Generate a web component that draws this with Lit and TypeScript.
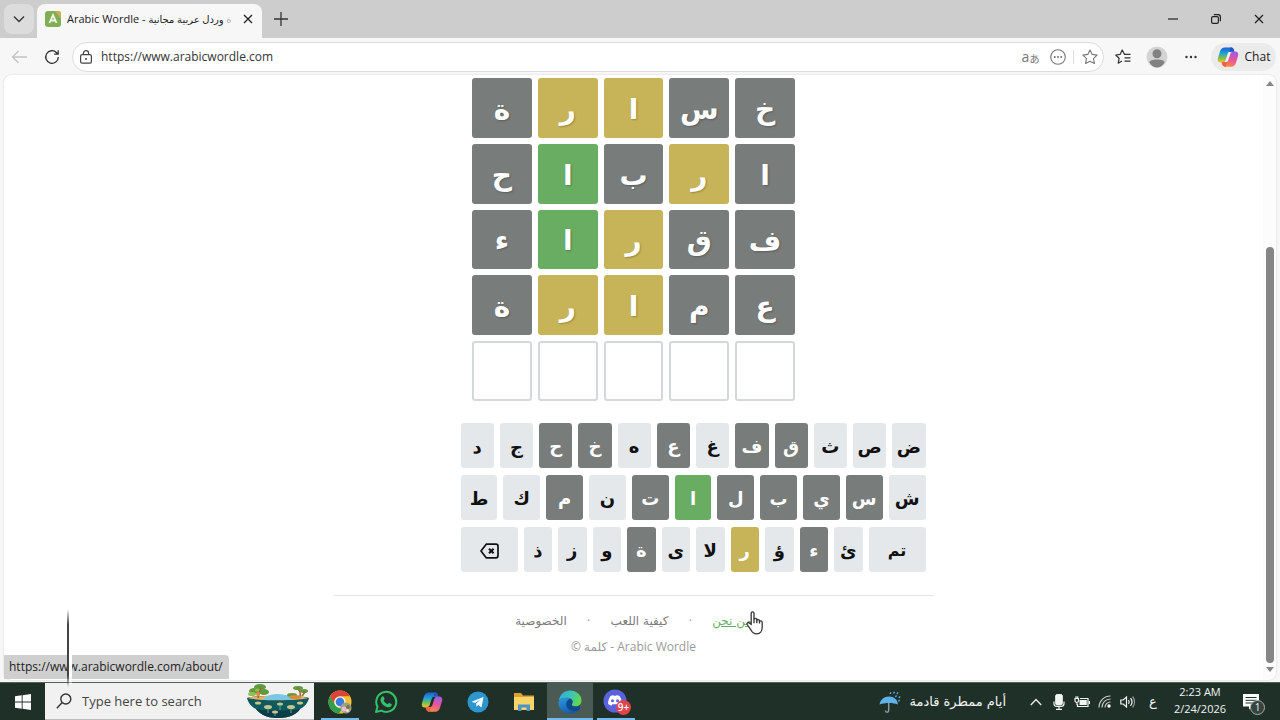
import { LitElement, html, css } from "lit";
import { customElement } from "lit/decorators.js";
import { classMap } from "lit/directives/class-map.js";

type Mark = "absent" | "present" | "correct" | "";

const A: Mark = "absent";
const P: Mark = "present";
const C: Mark = "correct";

const GUESSES: [string, Mark][][] = [
  [["خ", A], ["س", A], ["ا", P], ["ر", P], ["ة", A]],
  [["ا", A], ["ر", P], ["ب", A], ["ا", C], ["ح", A]],
  [["ف", A], ["ق", A], ["ر", P], ["ا", C], ["ء", A]],
  [["ع", A], ["م", A], ["ا", P], ["ر", P], ["ة", A]],
  [["", ""], ["", ""], ["", ""], ["", ""], ["", ""]],
];

const KEYS: string[][] = [
  ["ض", "ص", "ث", "ق", "ف", "غ", "ع", "ه", "خ", "ح", "ج", "د"],
  ["ش", "س", "ي", "ب", "ل", "ا", "ت", "ن", "م", "ك", "ط"],
  ["تم", "ئ", "ء", "ؤ", "ر", "لا", "ى", "ة", "و", "ز", "ذ", "⌫"],
];

const KEY_MARKS: Record<string, Mark> = {
  ق: A, ف: A, ع: A, خ: A, ح: A, س: A, ي: A, ب: A, ل: A, ت: A, م: A, ء: A, ة: A,
  ا: C,
  ر: P,
};

const copilot = (id: string, size: number, hole: string) => html`
  <svg width=${size} height=${size} viewBox="0 0 24 24" aria-hidden="true">
    <defs>
      <linearGradient id="${id}a" x1="0.3" y1="0" x2="0.3" y2="1">
        <stop offset="0" stop-color="#1b5fd0" /><stop offset="0.4" stop-color="#1fa3d8" />
        <stop offset="0.7" stop-color="#7cc04b" /><stop offset="1" stop-color="#f2c230" />
      </linearGradient>
      <linearGradient id="${id}b" x1="0.6" y1="0" x2="0.3" y2="1">
        <stop offset="0" stop-color="#a55be0" /><stop offset="0.5" stop-color="#e8559c" />
        <stop offset="1" stop-color="#f98a3c" />
      </linearGradient>
    </defs>
    <path fill="url(#${id}a)" d="M8.500 1.500h7c1.400 0 2.300.9 2.700 2.200l.8 2.600-6.500 2-3 9.700H4.200C1.600 18 .3 16 .9 13.500l2.500-8C4.100 3 6 1.500 8.500 1.500z" />
    <path fill="url(#${id}b)" d="M15.500 22.500h-7c-1.400 0-2.300-.9-2.700-2.200L5 17.700l6-2 3.300-9.700h5.500c2.600 0 3.900 2 3.300 4.500l-2.500 8C19.900 21 18 22.500 15.500 22.500z" />
    <path fill="#1f57c9" d="M14.200 1.500h1.300c1.400 0 2.300.9 2.700 2.200l.7 2.300h-2.200c-1.500 0-2.600.6-3.200 1.700z" />
    <path fill="#f0603c" d="M9.800 22.500H8.500c-1.400 0-2.300-.9-2.700-2.200L5.100 18h2.200c1.500 0 2.600-.6 3.200-1.700z" />
    <path fill=${hole} d="M12.800 6.500h3.400c-1.100.5-1.500 1.300-1.800 2.400l-1.900 6.200c-.5 1.700-1.200 2.400-3 2.400H7.800c1.100-.5 1.500-1.300 1.800-2.400l1.900-6.200c.3-1.100.6-1.900 1.300-2.400z" />
  </svg>`;

const icon = {
  chevronDown: html`<svg width="12" height="12" viewBox="0 0 12 12" fill="none" stroke="#333" stroke-width="1.300"><path d="M1 3.500l5 5 5-5" /></svg>`,
  favicon: html`<svg width="16" height="16" viewBox="0 0 16 16"><rect width="16" height="16" rx="3" fill="#7fae54" /><path d="M10 0h3a3 3 0 0 1 3 3v5z" fill="#c8b055" /><path d="M4.500 12L8 4l3.500 8M6 9.500h4" fill="none" stroke="#f4f6e8" stroke-width="1.800" /></svg>`,
  close: html`<svg width="10" height="10" viewBox="0 0 10 10" stroke="#222" stroke-width="1.300"><path d="M1 1l8 8M9 1l-8 8" /></svg>`,
  plus: html`<svg width="14" height="14" viewBox="0 0 14 14" stroke="#333" stroke-width="1.300"><path d="M7 0v14M0 7h14" /></svg>`,
  min: html`<svg width="10" height="10" viewBox="0 0 10 10" stroke="#222" stroke-width="1.200"><path d="M0 5h10" /></svg>`,
  restore: html`<svg width="10" height="10" viewBox="0 0 10 10" fill="none" stroke="#222" stroke-width="1.200"><rect x=".6" y="2.600" width="6.800" height="6.800" rx="1.400" /><path d="M2.800.7h4.400a2.200 2.200 0 0 1 2.200 2.200v4.300" /></svg>`,
  back: html`<svg width="16" height="14" viewBox="0 0 16 14" fill="none" stroke="#c4c4c4" stroke-width="1.300"><path d="M16 7H1.500M7.500 1l-6 6 6 6" /></svg>`,
  reload: html`<svg width="16" height="16" viewBox="0 0 16 16" fill="none" stroke="#333" stroke-width="1.300"><path d="M14.300 8A6.300 6.300 0 1 1 12.600 3.700L14 5.200M14.200 1.200v4h-4" /></svg>`,
  lock: html`<svg width="12" height="14" viewBox="0 0 12 14" fill="none" stroke="#444" stroke-width="1.200"><rect x=".6" y="4.600" width="10.800" height="8.600" rx="1.600" /><path d="M3.400 4.500V3.200a2.600 2.600 0 0 1 5.200 0v1.300" /><circle cx="6" cy="9" r="1" fill="#444" stroke="none" /></svg>`,
  more: html`<svg width="16" height="16" viewBox="0 0 16 16"><circle cx="8" cy="8" r="7.300" fill="none" stroke="#777" stroke-width="1.100" /><g fill="#666"><circle cx="4.800" cy="8" r=".9" /><circle cx="8" cy="8" r=".9" /><circle cx="11.200" cy="8" r=".9" /></g></svg>`,
  star: html`<svg width="16" height="16" viewBox="0 0 16 16" fill="none" stroke="#777" stroke-width="1.100" stroke-linejoin="round"><path d="M8 .9l2.200 4.500 4.900.7-3.600 3.500.9 4.900L8 12.200l-4.400 2.300.9-4.900L.9 6.100l4.900-.7z" /></svg>`,
  favorites: html`<svg width="16" height="16" viewBox="0 0 16 16" fill="none" stroke="#333" stroke-width="1.200" stroke-linejoin="round"><path d="M15.500 5.400H9.500L7.200 1 5.200 5.300.7 6l3.400 3.300-.9 4.900L7 12M9.500 8.800h6M9.500 12.200h6" /></svg>`,
  avatar: html`<svg width="22" height="22" viewBox="0 0 22 22"><circle cx="11" cy="11" r="10.500" fill="#d4d4d4" /><circle cx="11" cy="7.700" r="4.500" fill="#828282" /><path d="M3.500 16.500c0-2 3-3 7.500-3s7.500 1 7.500 3c-1.500 3-4.500 5-7.500 5s-6-2-7.500-5z" fill="#828282" /></svg>`,
  dots: html`<svg width="12" height="4" viewBox="0 0 12 4" fill="#333"><circle cx="1.500" cy="2" r="1.200" /><circle cx="6" cy="2" r="1.200" /><circle cx="10.500" cy="2" r="1.200" /></svg>`,
  backspace: html`<svg width="19" height="16" viewBox="0 0 19 16" fill="none" stroke="#111" stroke-width="1.700" stroke-linejoin="round"><path d="M6.200 1.200h9.800a2 2 0 0 1 2 2v9.600a2 2 0 0 1-2 2H6.200L1 8z" /><path d="M9 5.700l4.600 4.600M13.600 5.700L9 10.300" stroke-width="2" /></svg>`,
  hand: html`<svg width="18" height="24" viewBox="0 0 18 24" fill="#fff" stroke="#333" stroke-width="1.300" stroke-linejoin="round"><path d="M5.200 13.500V2.300c0-2 2.800-2 2.800 0v6.200c.2-1.500 2.700-1.400 2.800.2v.6c.4-1.200 2.600-1 2.700.5v.7c.6-1 2.700-.7 2.700.9v4.900c0 3.800-2.200 6.500-5.500 6.500-3 0-4.300-1.200-5.600-3.600L1.200 13.500c-.8-1.500 1-2.700 2.200-1.500z" /><path d="M8 8.500v3.800M10.800 9v3.300M13.500 10v2.500" fill="none" /></svg>`,
  windows: html`<svg width="16" height="16" viewBox="0 0 16 16" fill="#fff"><path d="M0 2.300l6.700-1v6.200H0zM7.600 1.200L16 0v7.500H7.600zM0 8.400h6.700v6.300L0 13.700zM7.600 8.400H16V16l-8.400-1.200z" /></svg>`,
  search: html`<svg width="16" height="16" viewBox="0 0 16 16" fill="none" stroke="#333" stroke-width="1.400"><circle cx="9.800" cy="6" r="5" /><path d="M6.200 9.600L.8 15.200" /></svg>`,
  island: html`<svg width="64" height="36" viewBox="0 0 64 36">
    <path d="M1 15c4-3 58-3 62 0-1 5-5 9-9 11-2 4-9 9-22 9S13 30 10 26C6 24 2 20 1 15z" fill="#0f5a5e" />
    <path d="M10 26c6 2 38 2 44 0-2 4-9 9-22 9S13 30 10 26z" fill="#0b3c47" />
    <path d="M2 15c8-3 52-3 60 0-8 3-52 3-60 0z" fill="#e2b06a" />
    <path d="M20 14c5-4 18-4 24 0l3 3H17z" fill="#7cc6e6" />
    <g fill="#5f9a3c"><ellipse cx="8" cy="8" rx="5" ry="3" /><ellipse cx="14" cy="4" rx="6" ry="3" /><ellipse cx="18" cy="9" rx="5" ry="3" /><ellipse cx="52" cy="5" rx="5" ry="2" /><ellipse cx="58" cy="8" rx="4" ry="2" /><ellipse cx="46" cy="12" rx="5" ry="2" /></g>
    <g fill="#93bf52"><ellipse cx="6" cy="11" rx="4" ry="2" /><ellipse cx="12" cy="7" rx="3" ry="1.500" /></g>
    <g stroke="#a8622e" stroke-width="1.500" fill="none"><path d="M12 15c1-4 1-7 3-10M54 14c1-4 0-6-2-8M56 13l3-4" /></g>
    <g fill="#d98b3a"><circle cx="12" cy="11" r="2" /><ellipse cx="49" cy="14" rx="6" ry="2" /></g>
    <g fill="#c9c48a"><ellipse cx="22" cy="24" rx="4" ry="2" /><ellipse cx="34" cy="21" rx="3" ry="1.500" /><ellipse cx="45" cy="24" rx="4" ry="2" /><ellipse cx="29" cy="29" rx="3" ry="1.500" /><ellipse cx="12" cy="20" rx="3" ry="1.500" /><ellipse cx="54" cy="20" rx="3" ry="1.500" /></g>
    <path d="M22 26v4M45 26v4M34 22v5M29 30v3" stroke="#4fa7a0" stroke-width="1" />
  </svg>`,
  chrome: html`<svg width="24" height="24" viewBox="0 0 24 24">
    <circle cx="12" cy="12" r="11.500" fill="#f4c430" />
    <path d="M2 6.200A11.500 11.500 0 0 1 22 6.200H12a6 6 0 0 0-5.200 8.600z" fill="#dd4437" />
    <path d="M2 6.200l5 8.800a6 6 0 0 0 7.500 2.500l-3.300 6A11.500 11.500 0 0 1 2 6.200z" fill="#2f9e4f" />
    <circle cx="12" cy="12" r="5.600" fill="#fff" /><circle cx="12" cy="12" r="4.400" fill="#3b7de0" />
    <circle cx="18" cy="18" r="5.500" fill="#a79a86" /><circle cx="16" cy="19" r="2.500" fill="#dfc4cf" /><circle cx="20" cy="17" r="2" fill="#6e7a4e" /><circle cx="19.500" cy="20.500" r="1.500" fill="#ece6dc" />
  </svg>`,
  whatsapp: html`<svg width="24" height="24" viewBox="0 0 24 24"><path d="M2 22l1.500-5.300A10 10 0 1 1 7.400 20.600z" fill="none" stroke="#35c06a" stroke-width="2" stroke-linejoin="round" /><path d="M8.200 6.500c.6-.5 1.200-.3 1.500.3l.8 1.800c.1.400 0 .8-.9 1.800.9 1.800 2.300 3 4.100 3.800.9-1 1.200-1.300 1.600-1.200l2 .9c.5.300.5.700.3 1.400-.6 1.800-2.700 2.400-4.300 1.900-3.300-1-5.600-3.200-6.600-6-.5-1.700.3-3.800 1.500-4.700z" fill="#35c06a" /></svg>`,
  telegram: html`<svg width="22" height="22" viewBox="0 0 22 22"><circle cx="11" cy="11" r="10.500" fill="#2d96cf" /><path d="M4.500 10.700l12-4.700-2 10.500-3.300-2.400-1.700 1.700-.4-3.200 4.600-4.200-5.900 3.600z" fill="#fff" /></svg>`,
  folder: html`<svg width="22" height="20" viewBox="0 0 22 20"><path d="M1 1h7l2 2.500h11V8H1z" fill="#dca132" /><rect x="1" y="5" width="20" height="13" fill="#f7d468" /><path d="M5 19v-6.500h12V19h-3.500v-3.500h-5V19z" fill="#4a92c8" /></svg>`,
  edge: html`<svg width="24" height="24" viewBox="0 0 24 24">
    <defs>
      <linearGradient id="eg" x1="0" y1="0" x2="1" y2=".3"><stop offset="0" stop-color="#2fa9e0" /><stop offset=".6" stop-color="#3cc7b4" /><stop offset="1" stop-color="#62d64e" /></linearGradient>
      <linearGradient id="eb" x1="0" y1="0" x2=".6" y2="1"><stop offset="0" stop-color="#2b9be4" /><stop offset="1" stop-color="#1259a8" /></linearGradient>
    </defs>
    <path d="M.8 10.500C1.600 4.600 6.400.5 12 .5c6.500 0 11.500 4.500 11.500 10 0 3.500-2.600 6-5.800 6-2.500 0-4-1-4-2 0-.6.900-1 .9-2.700 0-2.300-2-4-5-4C5.600 7.800 2 9 .8 10.500z" fill="url(#eg)" />
    <path d="M.5 12.500C.8 9.300 4.500 7.700 8 7.700c2 0 3.600.5 4.600 1.200-2.500.3-4.300 2.500-4.300 5.100 0 4 3.700 7 8 7 2.200 0 3.900-.7 5-1.300-2 2.400-5.600 3.900-9.300 3.900C5.500 23.500.2 18.500.5 12.500z" fill="url(#eb)" />
    <path d="M8.300 14c0-2.600 1.800-4.800 4.300-5.100 1.300.7 2 1.800 2 3 0 1.600-.9 2-.9 2.600 0 1 1.500 2 4 2 1.500 0 2.900-.5 3.900-1.500.6 1.500.7 3.400-.3 4.700-5 2.700-13 .8-13-5.700z" fill="#0f4a8c" />
  </svg>`,
  discord: html`<svg width="26" height="26" viewBox="0 0 26 26"><circle cx="12" cy="12" r="11.500" fill="#5a63dc" /><path d="M7.500 7c2-1 3-.9 3.400-.3h2.200c.5-.6 1.500-.7 3.400.3 1.800 2.600 2.500 5.300 2.300 8-1.600 1.400-2.700 1.500-3.300 1.500l-.9-1.300H9.400l-.9 1.300c-.6 0-1.700-.1-3.300-1.500-.2-2.700.5-5.400 2.300-8z" fill="#fff" /><circle cx="9.500" cy="11.800" r="1.500" fill="#5a63dc" /><circle cx="14.500" cy="11.800" r="1.500" fill="#5a63dc" /></svg>`,
  umbrella: html`<svg width="22" height="22" viewBox="0 0 22 22"><path d="M.5 13.500c.8-5 4.500-8 9.500-8s8.700 3 9 8c-5-2-13-2-18.500 0z" fill="#5fb2ea" /><path d="M9.700 12v7.500c0 2.300-3.200 2.300-3.200 0" fill="none" stroke="#8a9aa4" stroke-width="1.500" /><path d="M11 3l1-1.700M14.500 2.500l1-1.700M18 3l1-1.700M16.500 6l1-1.700M20 7l1-1.700M19.500 10.500l1-1.700" stroke="#5fb2ea" stroke-width="1.300" /></svg>`,
  up: html`<svg width="12" height="8" viewBox="0 0 12 8" fill="none" stroke="#e6e9e8" stroke-width="1.400"><path d="M.8 7L6 1.500 11.200 7" /></svg>`,
  mic: html`<svg width="12" height="16" viewBox="0 0 12 16" fill="none" stroke="#f2f4f3"><rect x="2.700" y=".5" width="6.600" height="10.500" rx="1.500" fill="#f2f4f3" /><path d="M1 7.500v2.300c0 1.700 1.200 2.700 3 2.700h4c1.800 0 3-1 3-2.700V7.500M6 12.500V15M3 15.300h6" stroke-width="1.200" /></svg>`,
  battery: html`<svg width="16" height="12" viewBox="0 0 16 12" fill="none" stroke="#f2f4f3" stroke-width="1.200"><path d="M6 2.500h8v8H3.500V8" /><path d="M15.400 5v3" /><rect x="5.500" y="4" width="7.300" height="5" fill="#f2f4f3" stroke="none" /><path d="M1 2.500h3.500v2c0 1.200-.6 2-1.700 2S1 5.700 1 4.500zM2 .3v2M3.700.3v2M3 6.500V9" /></svg>`,
  wifi: html`<svg width="13" height="13" viewBox="0 0 13 13" fill="none" stroke="#c4cbc8" stroke-width="1.200"><path d="M1 12.500C1 6 6 1 12.500 1M4 12.500c0-4.800 3.700-8.500 8.500-8.500M7 12.500c0-3 2.400-5.500 5.500-5.500" /><circle cx="11" cy="11" r="1.700" fill="#fff" stroke="none" /></svg>`,
  sound: html`<svg width="16" height="14" viewBox="0 0 16 14" fill="none" stroke="#f2f4f3" stroke-width="1.200"><path d="M.8 5h2.400L6.500 2v10L3.200 9H.8z" /><path d="M8.500 5c.9 1.200.9 2.800 0 4M10.500 3.200c1.800 2.200 1.800 5.400 0 7.600" /><path d="M12.600 1.500c2.600 3.200 2.600 7.800 0 11" stroke="#8d9894" /></svg>`,
  note: html`<svg width="16" height="16" viewBox="0 0 16 16"><path d="M0 0h16v12.500H9L6 15.500v-3H0z" fill="#fff" /><path d="M2.500 3.500h11M2.500 6.300h11M2.500 9h8" stroke="#1f3029" stroke-width="1" /></svg>`,
};

@customElement("app-root")
export class AppRoot extends LitElement {
  static styles = css`
    :host {
      display: flex;
      flex-direction: column;
      height: 100vh;
      position: relative;
      overflow: hidden;
      background: #f7f7f7;
      color: #222;
      font: 12px/16px "Open Sans", "Noto Sans", "DejaVu Sans", sans-serif;
    }
    * { box-sizing: border-box; }
    svg { display: block; flex: none; }
    button, input {
      font: inherit;
      color: inherit;
      border: 0;
      padding: 0;
      margin: 0;
      background: none;
      outline: 0;
    }
    button { display: flex; align-items: center; justify-content: center; }

    .tabs { display: flex; align-items: flex-end; height: 38px; background: #cdcdcd; padding-left: 4px; flex: none; }
    .tab-menu { width: 30px; height: 30px; border-radius: 8px; background: #dcdcdc; align-self: center; }
    .tab { display: flex; align-items: center; gap: 6px; width: 225px; height: 34px; margin-left: 3px; padding: 0 4px 4px 8px; border-radius: 8px 8px 0 0; background: #f7f7f7; }
    .tab-title { flex: 1; white-space: nowrap; font-size: 11px; }
    .tab-title bdi { font-size: 10px; }
    .faded { color: #b5b5b5; }
    .tab-close { width: 20px; height: 20px; }
    .new-tab { width: 38px; height: 38px; }
    .window-controls { display: flex; margin-left: auto; }
    .window-controls button { width: 43px; height: 38px; }

    .toolbar { display: flex; align-items: center; height: 37px; padding: 0 4px; flex: none; }
    .tool { width: 34px; height: 30px; flex: none; }
    .tool.nav { width: 30px; margin-right: 3px; }
    .address { display: flex; align-items: center; flex: 1; height: 30px; margin: 0 2px; padding: 0 0 0 7px; gap: 9px; border: 1px solid #dcdcdc; border-radius: 15px; background: #fff; }
    .address input { flex: 1; min-width: 0; font-size: 12px; color: #333; }
    .address-tools { display: flex; align-items: center; }
    .address-tools button { width: 27px; height: 28px; }
    .translate { color: #777; font: 14px/16px "Open Sans", "Noto Sans CJK JP", sans-serif; }
    .translate small { font-size: 10px; padding-top: 5px; }
    .separator { width: 1px; height: 14px; margin: 0 2px; background: #ddd; }
    .chat { width: 65px; height: 28px; gap: 6px; margin-left: 3px; border-radius: 14px; background: #ebebeb; font-size: 12px; flex: none; }

    .viewport { display: flex; flex: 1; min-height: 0; margin: 0 4px 2px; border-radius: 8px; background: #fff; overflow: hidden; box-shadow: 0 0 2px #ccc; }
    .page { flex: 1; overflow: hidden; padding-top: 3px; font-family: "DejaVu Sans", sans-serif; }
    .content { display: flex; flex-direction: column; width: 100%; max-width: 600px; margin: 0 auto; }
    .board { display: grid; grid-template-columns: repeat(5, 1fr); gap: 6px; width: 323px; align-self: center; }
    .tile { display: flex; align-items: center; justify-content: center; aspect-ratio: 1; padding-top: 4px; border: 2px solid #d3d9db; border-radius: 3px; font-size: 28px; line-height: 36px; font-weight: 700; }
    .absent { background: #787c7b; border-color: #787c7b; color: #fff; }
    .present { background: #c8b458; border-color: #c8b458; color: #fff; }
    .correct { background: #69ad63; border-color: #69ad63; color: #fff; }
    .tile.absent, .tile.present, .tile.correct { text-shadow: 1px 1px 2px rgb(0 0 0 / 25%); }
    .keyboard { display: flex; flex-direction: column; gap: 7px; width: 481px; max-width: 100%; margin-top: 22px; padding: 0 8px; }
    .key-row { display: flex; gap: 6px; }
    .key { flex: 1 1 0; height: 45px; padding-top: 3px; border-radius: 3px; font-size: 18px; line-height: 24px; font-weight: 700; color: #111; background: #e5e8eb; }
    .key.absent { background: #787c7b; color: #fff; }
    .key.present { background: #c8b458; color: #fff; }
    .key.correct { background: #69ad63; color: #fff; }
    .key.wide { flex-grow: 2; }
    .key.enter { font-size: 16px; }
    footer { margin-top: 23px; padding-top: 16px; border-top: 1px solid #e6e6e6; text-align: center; color: #999; font-size: 12px; line-height: 18px; }
    .links { display: flex; justify-content: center; gap: 20px; }
    .links a { color: #7b7b7b; text-decoration: none; }
    .links a.hovered { color: #69ad63; text-decoration: underline; }
    .copyright { margin: 8px 0 0; font-family: "Open Sans", "DejaVu Sans", sans-serif; }

    .scrollbar { display: flex; flex-direction: column; align-items: center; width: 13px; padding: 6px 0 8px; background: #fcfcfc; }
    .before { flex: 160; }
    .thumb { flex: 415; width: 8px; border-radius: 4px; background: #858585; }
    .after { flex: 4; }

    .status { position: absolute; left: 4px; bottom: 41px; height: 24px; padding: 0 6px 0 5px; border-radius: 0 4px 0 0; background: #cfcfcf; font-size: 12px; line-height: 24px; color: #222; }
    .pointer { position: absolute; left: 746px; top: 611px; }
    .trail { position: absolute; left: 67px; top: 609px; width: 5px; height: 78px; background: linear-gradient(90deg, #444 0 2px, #fff 2px); -webkit-mask-image: linear-gradient(transparent, #000 20%, #000 85%, transparent); mask-image: linear-gradient(transparent, #000 20%, #000 85%, transparent); }

    .taskbar { display: flex; align-items: stretch; height: 38px; background: #1f3029; color: #f2f4f3; flex: none; padding-right: 11px; border-top: 1px solid #52605a; }
    .start { width: 45px; }
    .search { display: flex; align-items: center; gap: 10px; width: 269px; padding: 0 4px 0 11px; background: #f1f1f1; border-bottom: 1px solid #bbb; color: #333; }
    .search input { flex: 1; min-width: 0; font-size: 13px; }
    .search input::placeholder { color: #444; opacity: 1; }
    .apps { display: flex; padding-left: 3px; }
    .app { position: relative; width: 46px; }
    .app.open::after { content: ""; position: absolute; left: 4px; right: 4px; bottom: 0; height: 2px; background: #76b9ed; }
    .app.active { background: #4a5a54; }
    .app.active::after { left: 0; right: 0; }
    .badge { position: absolute; left: 23px; top: 17px; width: 15px; height: 15px; border-radius: 8px; background: #e0434b; color: #fff; font-size: 10px; line-height: 15px; font-weight: 600; }
    .tray { display: flex; align-items: stretch; margin-left: auto; }
    .weather { gap: 8px; margin-right: 18px; font-family: "DejaVu Sans", sans-serif; font-size: 13px; }
    .tray-icon { width: 23px; }
    .lang { width: 28px; font-family: "DejaVu Sans", sans-serif; font-size: 13px; }
    .clock { width: 66px; flex-direction: column; padding-bottom: 3px; font-size: 11px; line-height: 17px; }
    .notifications { position: relative; width: 36px; }
    .count { position: absolute; left: 17px; top: 17px; width: 15px; height: 15px; border: 1px solid #a6aeaa; border-radius: 8px; background: #36443e; font-size: 10px; line-height: 13px; }
  `;

  private renderKey(k: string) {
    const erase = k === "⌫";
    const enter = k === "تم";
    const mark = KEY_MARKS[k] ?? "";
    return html`<button
      class=${classMap({ key: true, wide: erase || enter, enter, absent: mark === A, present: mark === P, correct: mark === C })}
      aria-label=${erase ? "حذف" : k}
    >${erase ? icon.backspace : k}</button>`;
  }

  private renderApp(label: string, glyph: unknown, state = "", badge = "") {
    return html`<button class="app ${state}" aria-label=${label}>${glyph}${badge ? html`<span class="badge">${badge}</span>` : ""}</button>`;
  }

  render() {
    return html`
      <div class="tabs">
        <button class="tab-menu" aria-label="Tab actions">${icon.chevronDown}</button>
        <div class="tab">
          ${icon.favicon}
          <span class="tab-title">Arabic Wordle - <bdi dir="rtl"><span class="faded">ة</span> وردل عربية مجانية</bdi></span>
          <button class="tab-close" aria-label="Close tab">${icon.close}</button>
        </div>
        <button class="new-tab" aria-label="New tab">${icon.plus}</button>
        <div class="window-controls">
          <button aria-label="Minimize">${icon.min}</button>
          <button aria-label="Restore">${icon.restore}</button>
          <button aria-label="Close">${icon.close}</button>
        </div>
      </div>

      <div class="toolbar">
        <button class="tool nav" aria-label="Back">${icon.back}</button>
        <button class="tool nav" aria-label="Refresh">${icon.reload}</button>
        <div class="address">
          ${icon.lock}
          <input type="text" aria-label="Address" .value=${"https://www.arabicwordle.com"} />
          <div class="address-tools">
            <button class="translate" aria-label="Translate">a<small>あ</small></button>
            <button aria-label="More">${icon.more}</button>
            <span class="separator"></span>
            <button aria-label="Add to favorites">${icon.star}</button>
          </div>
        </div>
        <button class="tool" aria-label="Favorites">${icon.favorites}</button>
        <button class="tool" aria-label="Profile">${icon.avatar}</button>
        <button class="tool" aria-label="Settings">${icon.dots}</button>
        <button class="chat">${copilot("chat", 22, "#f4f4f4")}Chat</button>
      </div>

      <div class="viewport">
        <main class="page" dir="rtl" lang="ar">
          <div class="content">
            <div class="board">
              ${GUESSES.flat().map(([letter, mark]) => html`<div class="tile ${mark}">${letter}</div>`)}
            </div>
            <div class="keyboard">
              ${KEYS.map((row) => html`<div class="key-row">${row.map((k) => this.renderKey(k))}</div>`)}
            </div>
            <footer>
              <nav class="links">
                <a class="hovered" href="#about">من نحن</a><span>·</span>
                <a href="#how">كيفية اللعب</a><span>·</span>
                <a href="#privacy">الخصوصية</a>
              </nav>
              <p class="copyright" dir="ltr">© كلمة - Arabic Wordle</p>
            </footer>
          </div>
        </main>
        <div class="scrollbar">
          <svg width="8" height="5" viewBox="0 0 8 5" fill="#858585"><path d="M4 0l4 5H0z" /></svg>
          <span class="before"></span><span class="thumb"></span><span class="after"></span>
          <svg width="8" height="5" viewBox="0 0 8 5" fill="#858585"><path d="M4 5l4-5H0z" /></svg>
        </div>
      </div>

      <div class="taskbar">
        <button class="start" aria-label="Start">${icon.windows}</button>
        <label class="search">
          ${icon.search}
          <input type="text" aria-label="Search" placeholder="Type here to search" />
          ${icon.island}
        </label>
        <div class="apps">
          ${this.renderApp("Chrome", icon.chrome, "open")}
          ${this.renderApp("WhatsApp", icon.whatsapp)}
          ${this.renderApp("Copilot", copilot("task", 22, "#1f3029"))}
          ${this.renderApp("Telegram", icon.telegram)}
          ${this.renderApp("File Explorer", icon.folder)}
          ${this.renderApp("Edge", icon.edge, "open active")}
          ${this.renderApp("Discord", icon.discord, "open", "9+")}
        </div>
        <div class="tray">
          <button class="weather">${icon.umbrella}<span dir="rtl">أيام ممطرة قادمة</span></button>
          <button class="tray-icon" aria-label="Hidden icons">${icon.up}</button>
          <button class="tray-icon" aria-label="Microphone">${icon.mic}</button>
          <button class="tray-icon" aria-label="Battery">${icon.battery}</button>
          <button class="tray-icon" aria-label="Network">${icon.wifi}</button>
          <button class="tray-icon" aria-label="Volume">${icon.sound}</button>
          <button class="lang">ع</button>
          <button class="clock"><span>2:23 AM</span><span>2/24/2026</span></button>
          <button class="notifications" aria-label="Notifications">${icon.note}<span class="count">1</span></button>
        </div>
      </div>

      <div class="status">https://www.arabicwordle.com/about/</div>
      <div class="trail"></div>
      <div class="pointer">${icon.hand}</div>
    `;
  }
}
